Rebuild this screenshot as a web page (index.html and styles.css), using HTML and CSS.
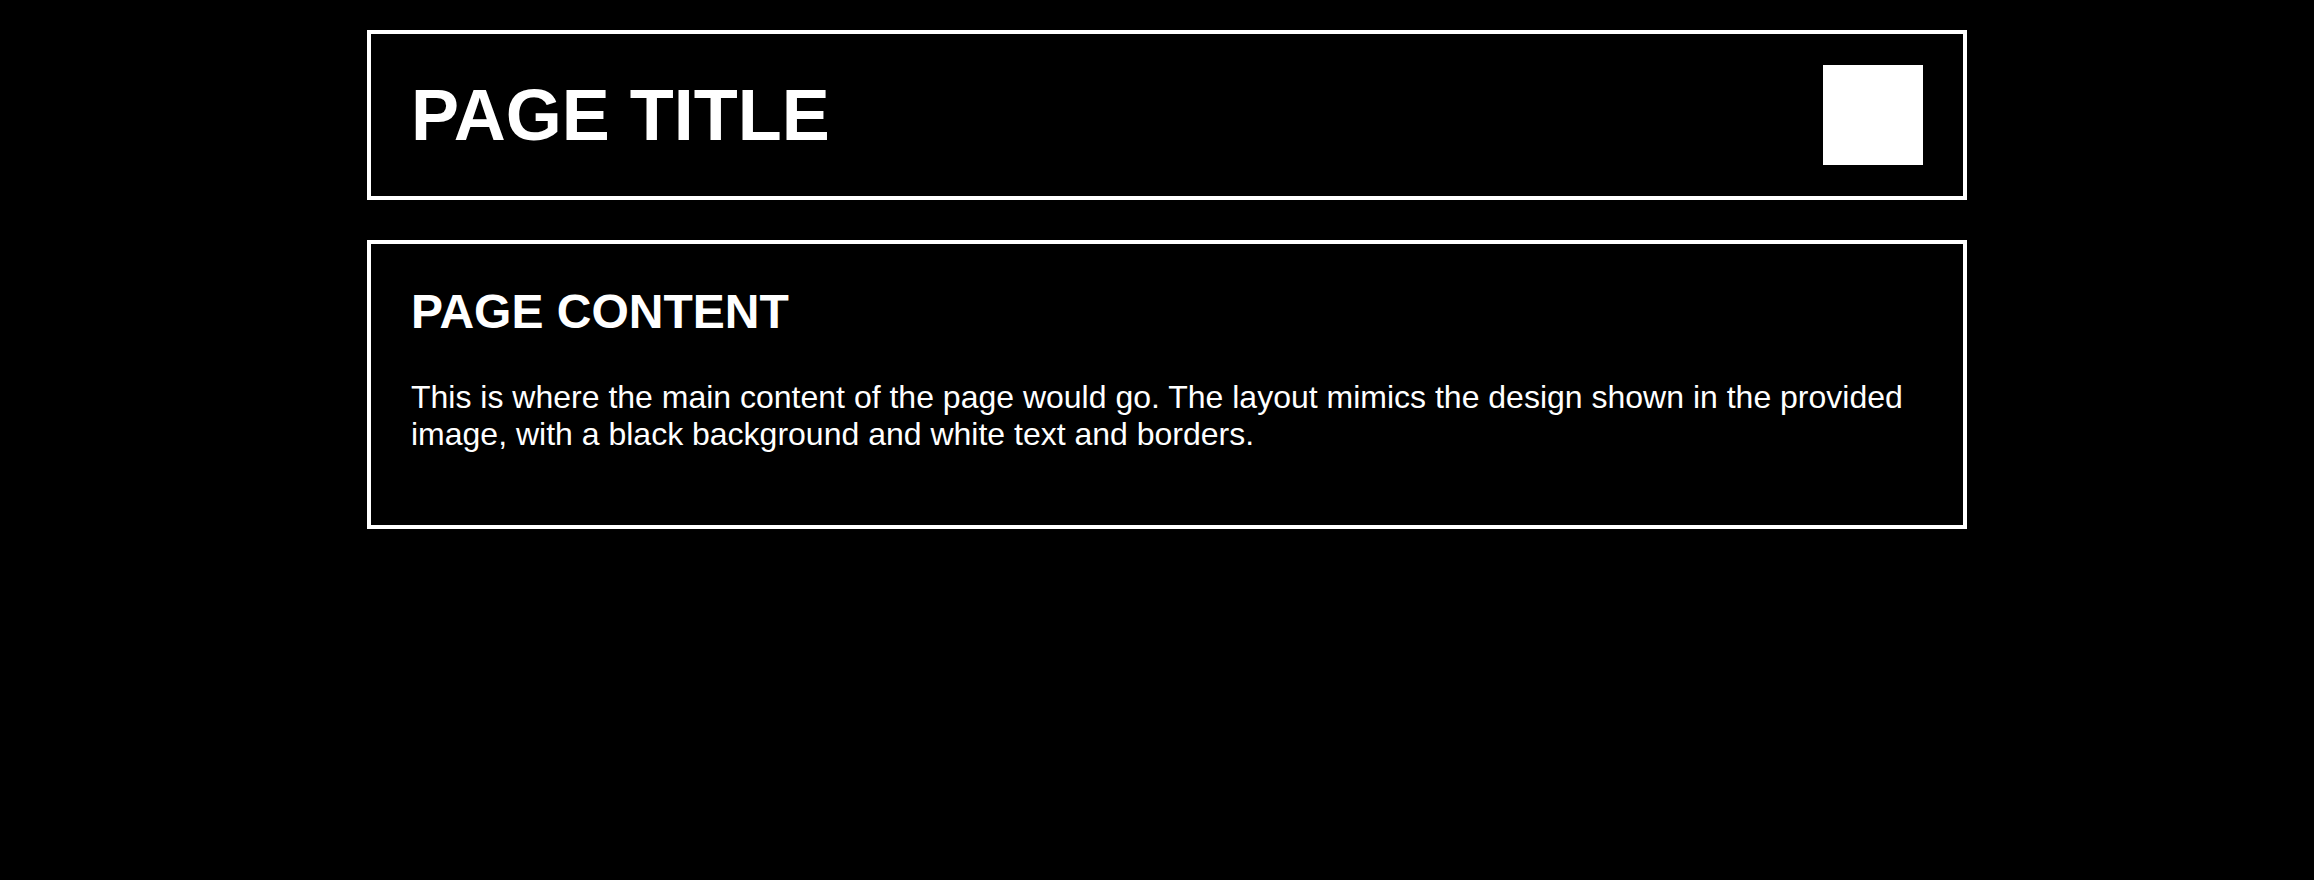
FILE: index.html
```html
<!DOCTYPE html>
<html lang="en">
<head>
<meta charset="utf-8">
<title>Page</title>
<link rel="stylesheet" href="styles.css">
</head>
<body>
<div class="container">
  <header class="header">
    <h1 class="title">PAGE TITLE</h1>
    <div class="logo"></div>
  </header>
  <main class="content">
    <h2 class="content-title">PAGE CONTENT</h2>
    <p class="content-text">This is where the main content of the page would go. The layout mimics the design shown in the provided image, with a black background and white text and borders.</p>
  </main>
</div>
</body>
</html>
```
FILE: styles.css
```css
html, body {
  background: #000;
}
body {
  margin: 0;
  padding: 30px 0 0 20px;
  color: #fff;
  font-family: "Liberation Sans", Arial, sans-serif;
}
.container {
  width: 1600px;
  margin: 0 auto;
  display: flex;
  flex-direction: column;
  gap: 40px;
}
.header {
  display: flex;
  align-items: center;
  justify-content: space-between;
  border: 4px solid #fff;
  padding: 31px 40px;
}
.title {
  margin: 0;
  font-size: 72px;
  font-weight: bold;
  line-height: normal;
}
.logo {
  width: 100px;
  height: 100px;
  background: #fff;
}
.content {
  border: 4px solid #fff;
  padding: 40px;
}
.content-title {
  margin: 0 0 40px 0;
  font-size: 48px;
  font-weight: bold;
  line-height: normal;
}
.content-text {
  margin: 0 0 32px 0;
  font-size: 32px;
  line-height: normal;
}
```
